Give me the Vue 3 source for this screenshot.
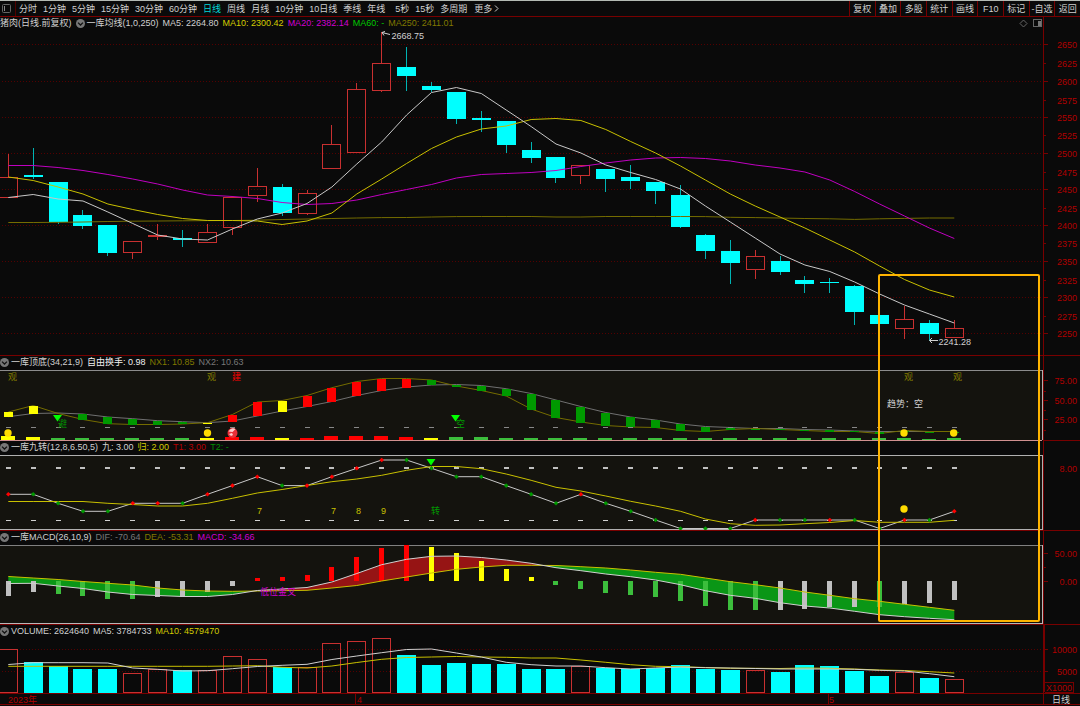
<script setup>
const STEP = 24.895
const cx = (i) => Math.round((8.3 + i * STEP) * 10) / 10
const px = (i) => Math.floor(8.3 + i * STEP)

const periods = ['分时', '1分钟', '5分钟', '15分钟', '30分钟', '60分钟', '日线', '周线', '月线', '10分钟', '10日线', '季线', '年线', '5秒', '15秒', '多周期']
const tools = ['复权', '叠加', '多股', '统计', '画线', 'F10', '标记', '-自选', '返回']

// up (1) or down (0), high, body top, body bottom, low
const candles = [
  [1, 154, 177, 197, 198], [0, 148, 175, 177, 179], [0, 182, 182, 222, 224], [0, 210, 215, 226, 229],
  [0, 225, 225, 253, 256], [1, 241, 241, 252, 259], [1, 224, 235, 236, 240], [0, 230, 238, 240, 247],
  [1, 224, 232, 242, 243], [1, 196, 197, 227, 235], [1, 168, 186, 195, 202], [0, 184, 187, 213, 216],
  [1, 190, 193, 213, 215], [1, 125, 144, 168, 168], [1, 83, 89, 152, 152], [1, 32, 63, 90, 92],
  [0, 47, 67, 76, 91], [0, 82, 86, 90, 92], [0, 92, 92, 119, 124], [0, 111, 118, 120, 132],
  [0, 121, 121, 145, 153], [0, 142, 150, 158, 163], [0, 157, 157, 178, 183], [1, 165, 165, 175, 184],
  [0, 169, 169, 179, 192], [0, 165, 177, 181, 189], [0, 182, 182, 191, 204], [0, 185, 195, 227, 228],
  [0, 234, 235, 251, 259], [0, 240, 251, 263, 284], [1, 250, 256, 269, 279], [0, 256, 261, 272, 275],
  [0, 276, 280, 284, 293], [0, 278, 282, 283, 293], [0, 285, 286, 312, 325], [0, 315, 315, 324, 324],
  [1, 306, 319, 328, 339], [0, 320, 323, 334, 341], [1, 320, 328, 337, 337]
]
const ma5 = [197.5, 194.5, 199, 201, 212, 223.5, 235, 239, 240, 229, 219, 213, 203.5, 187, 164, 142, 115, 92.5, 87.5, 93.5, 110, 126.5, 144, 153, 165, 172.5, 179.5, 189, 206, 222, 238, 254, 265, 271.5, 282, 294, 305, 314, 323]
const ma10 = [177, 180.5, 187, 194, 204, 209.5, 214.5, 218.5, 220.5, 220.5, 221, 224.5, 221, 213, 194, 179, 163.5, 148.5, 137, 129, 126, 119.5, 118.5, 120.5, 129.5, 141.5, 153, 166, 180, 194, 206, 217, 228, 240, 252, 266, 279.5, 290, 297]
const ma20 = [165.5, 165.5, 167.5, 170.5, 174.5, 179, 184, 190, 195, 196.5, 198.5, 202.5, 204.5, 203.5, 200, 194.5, 189.5, 184.5, 178, 174.5, 173.5, 172.5, 170.5, 166.5, 163, 160, 158, 157.5, 158.5, 161, 165, 168, 172, 180, 191.5, 204, 216, 228, 238.5]
const ma250 = [222.5, 222.5, 222.3, 222, 221.5, 221.2, 221, 220.8, 220.6, 220.5, 220.2, 219.5, 219, 218.5, 218, 217.6, 217.5, 217, 216.6, 216.5, 216.5, 216.5, 217, 217, 216.5, 216.5, 216.5, 216.5, 216.6, 217.3, 217.6, 218, 218.5, 218.8, 219.4, 218.8, 218.4, 218, 218]

const priceTicks = [
  ['2650', 45, 1], ['2625', 64, 0], ['2600', 82, 1], ['2575', 101, 0], ['2550', 118, 1], ['2525', 136, 0],
  ['2500', 154, 1], ['2475', 173, 0], ['2450', 190, 1], ['2425', 209, 0], ['2400', 226, 1], ['2375', 244, 0],
  ['2350', 262, 1], ['2325', 281, 0], ['2300', 298, 1], ['2275', 317, 0], ['2250', 334, 1]
]
const gridRows = priceTicks.filter((t) => t[2]).map((t) => t[1])

const nx1 = [412, 405.5, 413.5, 419.5, 423.7, 424.5, 424.5, 424, 422.7, 414.5, 402, 400.5, 395.5, 387.7, 381.5, 378.5, 378.5, 380, 386, 390.5, 396, 409, 417.5, 422, 425.5, 427, 427.5, 430.5, 431.5, 429.5, 428.5, 429.5, 430.5, 431.5, 431.5, 433.5, 430.5, 431.5, 431.5]
const nx2 = [416.7, 413.5, 413, 414, 417, 418.7, 420.7, 421.7, 422.7, 421, 416, 411, 406.5, 401.5, 395.5, 390.5, 387, 385, 384.5, 385.5, 388.7, 393.5, 400, 406.5, 412.5, 417, 420, 424, 426.5, 427.5, 428.5, 428.5, 429.5, 430, 431, 431.5, 431.5, 431.5, 431.5]
const Y = '#ffff00', R = '#ff0000', G = '#009900', L = '#3cbe3c', W = '#c0c0c0'
const trendColor = (i) => (i < 2 || i === 8 || i === 11 ? Y : i < 8 ? G : i < 17 ? R : G)
const trendBars = nx1
  .map((a, i) => {
    const top = Math.round(Math.min(a, nx2[i]))
    return { i, top, h: Math.max(1, Math.round(Math.abs(a - nx2[i]))), fill: trendColor(i) }
  })
  .filter((b) => b.i !== 2)
const footHeights = [4, 3, 2, 2, 2, 2, 2, 2, 2, 3, 3, 2, 2, 4, 4, 4, 3, 2, 3, 3, 2, 2, 2, 2, 2, 2, 2, 2, 2, 2, 2, 2, 2, 2, 2, 2, 2, 1, 2]
const footColor = (i) => ([0, 1, 8, 11, 17].includes(i) ? Y : i >= 9 && i <= 16 ? R : L)

const nine = [494.3, 494.3, 503.3, 511.3, 511.3, 503.3, 503.3, 503.3, 494.3, 485.6, 476.7, 485.6, 485.6, 476.7, 468.3, 460, 460, 468.3, 476.7, 476.7, 485.6, 494.3, 503.3, 494.3, 503.3, 511.3, 520, 528.5, 528.5, 528.5, 520, 520, 520, 520, 520, 528.5, 520, 520, 511.3]
const back = [501.5, 501.5, 501.5, 501.5, 503.3, 504.5, 506, 506, 503.3, 498.3, 493, 489.5, 485.5, 481.7, 479, 475.3, 470.3, 466.5, 466.5, 468.7, 474, 480.3, 487.3, 491, 496, 501.3, 506, 511.3, 519, 523.7, 525.3, 525, 523.7, 522.5, 520.5, 522.3, 522.3, 522.3, 520.3]
const redDots = [0, 5, 6, 8, 9, 10, 12, 13, 14, 15, 23, 30, 33, 36, 38]
const counts = [['7', 257], ['7', 331], ['8', 356], ['9', 381]]

const dif = [583.5, 583.3, 586, 588.5, 592, 594.5, 595.5, 596.5, 596.5, 594.5, 590.5, 589, 587.5, 582, 573.5, 564.7, 559.3, 556.3, 556, 557.5, 560, 563.3, 567.7, 570.7, 574, 576.7, 580, 584.7, 590.7, 595.3, 598.3, 602.7, 606, 608, 611.3, 614.7, 616.7, 618.3, 619.7]
const dea = [576.5, 578, 579.5, 581.5, 583.3, 585, 588, 590, 591, 591.3, 591, 590.7, 590.3, 588, 585.5, 581, 577, 573, 569.3, 567, 565.3, 565.3, 565.5, 566.7, 568, 570, 572.3, 574.3, 578, 581.7, 584.7, 588, 592, 595.3, 598.7, 601.3, 604.3, 607.3, 610.3]
const histDown = { 0: [596, W], 1: [592, W], 2: [594, L], 3: [596, L], 4: [599, L], 5: [599, L], 6: [597, W], 7: [597, W], 8: [592, W], 9: [586, W], 22: [585, L], 23: [589, L], 24: [593, L], 25: [595, L], 26: [597, L], 27: [601, L], 28: [606, L], 29: [610, L], 30: [610, L], 31: [610, W], 32: [609, W], 33: [607, W], 34: [607, W], 35: [607, L], 36: [604, W], 37: [603, W], 38: [600, W] }
const histUp = { 10: [578, R], 11: [577, R], 12: [575, R], 13: [567, R], 14: [557, R], 15: [548, R], 16: [545, R], 17: [547, Y], 18: [553, Y], 19: [561, Y], 20: [569, Y], 21: [577, Y] }

// up (1) or down (0), bar top
const volumes = [[1, 650], [0, 662], [0, 666], [0, 669], [0, 669], [1, 674], [1, 670], [0, 670], [1, 671], [1, 657], [1, 660], [0, 667], [1, 668], [1, 644], [1, 642], [1, 639], [0, 655], [0, 665], [0, 663], [0, 664], [0, 664], [0, 669], [0, 669], [1, 667], [0, 668], [0, 669], [0, 668], [0, 665], [0, 669], [0, 670], [1, 671], [0, 672], [0, 665], [0, 666], [0, 671], [0, 676], [1, 673], [0, 678], [1, 680]]
const vol5 = [664.5, 662.7, 662.7, 662.7, 663, 668, 669.3, 671, 670.7, 668.7, 666.5, 665.3, 664.3, 659.5, 656, 652.7, 649.5, 649, 653, 657, 662.3, 664.7, 666, 666, 667.7, 669, 668, 667, 667.7, 668, 668.5, 669, 669, 669, 669.3, 670.3, 671, 673.7, 676.7]
const vol10 = [666.3, 666.3, 666.3, 666.3, 666.3, 666.3, 666.3, 666.3, 666.3, 666, 665.7, 667.3, 668, 666, 662.5, 659.3, 657.5, 657, 656.5, 657, 657.3, 658, 658, 660, 662.3, 664.7, 666.3, 666.7, 667.5, 668.3, 668.3, 668.5, 668, 668.3, 669, 670, 670.5, 671.7, 673]

const line = (arr) => arr.map((y, i) => cx(i) + ',' + y).join(' ')
const band = (from, to, start, end) => {
  const top = [], bottom = []
  for (let i = from; i <= to; i++) {
    top.push(cx(i) + ',' + dif[i])
    bottom.unshift(cx(i) + ',' + dea[i])
  }
  return [start, ...top, end, ...bottom].filter(Boolean).join(' ')
}
const bands = [
  { pts: band(0, 9, '', '250,591.3'), fill: '#0a9616' },
  { pts: band(10, 21, '250,591.3', '544,565.4'), fill: '#961414' },
  { pts: band(22, 38, '544,565.4', ''), fill: '#0a9616' }
]
const all = candles.map((_, i) => i)
</script>

<template>
  <main class="app">
    <header class="toolbar">
      <button class="side" aria-label="侧栏">
        <svg width="9" height="9" viewBox="0 0 9 9"><rect x=".5" y=".5" width="8" height="8" rx="1" fill="none" stroke="#666" /><path d="M2.5 2v5" stroke="#888" stroke-width="1" /></svg>
      </button>
      <nav class="periods">
        <button v-for="p in periods" :key="p" :class="{ active: p === '日线', wide: p === '5秒' }">{{ p }}</button>
        <button class="more">更多<svg width="5" height="7" viewBox="0 0 5 7"><path d="M1 .5l3 3-3 3" fill="none" stroke="#ccc" /></svg></button>
      </nav>
      <nav class="tools">
        <button v-for="t in tools" :key="t">{{ t }}</button>
      </nav>
    </header>

    <div class="charts">
      <div class="head">
        <div class="info">
          <span>猪肉(日线.前复权)</span>
          <svg class="chev" viewBox="0 0 9 9"><circle cx="4.5" cy="4.5" r="4.5" /><path d="M2 3.6l2.5 2.4L7 3.6" /></svg>
          <span>一库均线(1,0,250)</span>
          <span>MA5: 2264.80</span>
          <span class="yellow">MA10: 2300.42</span>
          <span class="magenta">MA20: 2382.14</span>
          <span class="lime">MA60: -</span>
          <span class="olive">MA250: 2411.01</span>
          <svg class="corner" width="24" height="9" viewBox="0 0 24 9"><path d="M4.5 1L8 4.5 4.5 8 1 4.5z" fill="none" stroke="#666" /><rect x="14.5" y=".5" width="8" height="7" fill="none" stroke="#666" /><rect x="19" y="2" width="3" height="5" fill="#777" /></svg>
        </div>
      </div>
      <svg class="plot" viewBox="0 31 1080 325">
        <line v-for="y in gridRows" :key="y" class="grid" x1="2" x2="1043" :y1="y - 0.5" :y2="y - 0.5" />
        <g class="crisp">
          <g v-for="(c, i) in candles" :key="i" :class="c[0] ? 'up' : 'down'">
            <line :x1="px(i) + 0.5" :x2="px(i) + 0.5" :y1="c[1]" :y2="c[2]" />
            <line :x1="px(i) + 0.5" :x2="px(i) + 0.5" :y1="c[3]" :y2="c[4]" />
            <rect v-if="c[0]" :x="px(i) - 8.5" :y="c[2] + 0.5" width="18" :height="c[3] - c[2]" />
            <rect v-else :x="px(i) - 9" :y="c[2]" width="19" :height="c[3] - c[2]" />
          </g>
        </g>
        <polyline :points="line(ma250)" stroke="#746c00" />
        <polyline :points="line(ma20)" stroke="#c000c0" />
        <polyline :points="line(ma10)" stroke="#c8c000" />
        <polyline :points="line(ma5)" stroke="#c8c8c8" />
        <path d="M390 34.500l-8-2M385 31.500l-3 1 2 3" class="arrow" />
        <text x="391.500" y="36" class="light">2668.75</text>
        <path d="M938 340.500h-8M932 338l-2.500 2.500 2.500 2.500" class="arrow" />
        <text x="938.500" y="342" class="light">2241.28</text>
        <g class="axis">
          <path d="M1043.500 31v325M0 355.500h1080" />
          <path v-for="t in priceTicks" :key="t[0]" :d="`M1044 ${t[1] - 0.5}h${t[2] ? 4 : 2}`" />
          <text v-for="t in priceTicks" :key="'l' + t[0]" x="1077" :y="t[1]">{{ t[0] }}</text>
        </g>
      </svg>

      <div class="head">
        <div class="info">
          <svg class="chev" viewBox="0 0 9 9"><circle cx="4.5" cy="4.5" r="4.5" /><path d="M2 3.6l2.5 2.4L7 3.6" /></svg>
          <span>一库顶底(34,21,9)</span>
          <span class="bright">自由换手: 0.98</span>
          <span class="olive">NX1: 10.85</span>
          <span class="grey">NX2: 10.63</span>
        </div>
      </div>
      <svg class="plot" viewBox="0 370 1080 71">
        <rect x="0" y="370" width="1042" height="70" class="panel" />
        <polyline :points="line(nx2)" stroke="#707070" />
        <polyline :points="line(nx1)" stroke="#746c00" />
        <g class="crisp">
          <rect v-for="i in all" :key="'d' + i" :x="px(i) - 2" y="427" width="5" height="1" fill="#888" />
          <rect v-for="b in trendBars" :key="'t' + b.i" :x="px(b.i) - 4" :y="b.top" width="9" :height="b.h" :fill="b.fill" />
          <rect v-for="i in all" :key="'f' + i" :x="px(i) - 7" :y="440 - footHeights[i]" width="14" :height="footHeights[i]" :fill="footColor(i)" />
          <path d="M0 370.500h1042" stroke="#8c8c8c" />
          <path d="M1042.500 370v70" stroke="#b0b0b0" />
          <path d="M0 440.500h1042" stroke="#d09090" />
        </g>
        <path d="M53 415h9l-4.500 6.500z" fill="#00ff00" />
        <path d="M451 415h9l-4.500 6.500z" fill="#00ff00" />
        <circle cx="8" cy="433" r="3.700" fill="#ffdc00" />
        <circle cx="207.500" cy="433" r="3.700" fill="#ffdc00" />
        <circle cx="904" cy="433" r="3.700" fill="#ffdc00" />
        <circle cx="953.700" cy="433" r="3.700" fill="#ffdc00" />
        <circle cx="232.500" cy="433" r="5" fill="#e83038" />
        <path d="M228.500 431.500q3-5 7-2.500l-3 3zM229 434l3-1 1 2-2 1z" fill="#ffd0d0" />
        <text x="8" y="377" fill="#807800">观</text>
        <text x="207" y="377" fill="#807800">观</text>
        <text x="232" y="377" fill="#ff0000">建</text>
        <text x="904" y="377" fill="#807800">观</text>
        <text x="953" y="377" fill="#807800">观</text>
        <text x="58" y="424" fill="#009900">避</text>
        <text x="456" y="424" fill="#009900">空</text>
        <text x="887" y="404" class="light">趋势：空</text>
        <g class="axis">
          <path d="M1043.500 370v71M1043 440.500h37M1044 380.500h4M1044 391.500h2M1044 400.500h4M1044 410.500h2M1044 419.500h4M1044 430.500h2" />
          <text x="1077" y="381">75.00</text>
          <text x="1077" y="401">50.00</text>
          <text x="1077" y="420">25.00</text>
        </g>
      </svg>

      <div class="head">
        <div class="info">
          <svg class="chev" viewBox="0 0 9 9"><circle cx="4.5" cy="4.5" r="4.5" /><path d="M2 3.6l2.5 2.4L7 3.6" /></svg>
          <span>一库九转(12,8,6.50,5)</span>
          <span>九: 3.00</span>
          <span class="yellow">归: 2.00</span>
          <span class="red">T1: 3.00</span>
          <span class="green">T2: -</span>
        </div>
      </div>
      <svg class="plot" viewBox="0 455 1080 76">
        <rect x="0" y="455" width="1042" height="74" class="panel" />
        <g class="crisp">
          <rect v-for="i in all" :key="'a' + i" :x="px(i) - 2" y="467" width="5" height="2" :fill="W" />
          <rect v-for="i in all" :key="'b' + i" :x="px(i) - 2" y="520" width="5" height="1" fill="#d0d0d0" />
          <path d="M0 455.500h1042.500v74H0" fill="none" stroke="#b0b0b0" />
        </g>
        <polyline :points="line(nine)" stroke="#c8c8c8" />
        <polyline :points="line(back)" stroke="#c8c000" />
        <path v-for="(y, i) in nine" :key="i" :d="`M${cx(i)} ${y - 2.3}l2.300 2.300-2.300 2.300-2.300-2.300z`" :fill="redDots.includes(i) ? R : G" />
        <path d="M426.500 459h9l-4.500 6.500z" fill="#00ff00" />
        <circle cx="904" cy="509" r="3.700" fill="#ffdc00" />
        <text v-for="(c, k) in counts" :key="'c' + k" :x="c[1]" y="511" fill="#c8c000">{{ c[0] }}</text>
        <text x="431" y="511" fill="#009900">转</text>
        <g class="axis">
          <path d="M1043.500 455v76M0 530.500h1080" />
          <text x="1077" y="469">8.00</text>
        </g>
      </svg>

      <div class="head">
        <div class="info">
          <svg class="chev" viewBox="0 0 9 9"><circle cx="4.5" cy="4.5" r="4.5" /><path d="M2 3.6l2.5 2.4L7 3.6" /></svg>
          <span>一库MACD(26,10,9)</span>
          <span class="grey">DIF: -70.64</span>
          <span class="olive">DEA: -53.31</span>
          <span class="magenta">MACD: -34.66</span>
        </div>
      </div>
      <svg class="plot" viewBox="0 545 1080 80">
        <rect x="0" y="545" width="1042" height="79" class="panel" />
        <polygon v-for="b in bands" :key="b.pts" :points="b.pts" :fill="b.fill" />
        <path d="M0 545.500h1042" stroke="#808080" class="crisp" />
        <g class="crisp">
          <rect v-for="(v, i) in histDown" :key="i" :x="px(+i) - 2" y="581" width="5" :height="v[0] - 581" :fill="v[1]" />
          <rect v-for="(v, i) in histUp" :key="i" :x="px(+i) - 2" :y="v[0]" width="5" :height="581 - v[0]" :fill="v[1]" />
        </g>
        <polyline :points="line(dea)" stroke="#c8c000" />
        <polyline :points="line(dif)" stroke="#d0d0d0" />
        <text x="260" y="592" fill="#d000d0">低位金叉</text>
        <path d="M1042.500 545v78.500H0" fill="none" stroke="#b8b8b8" class="crisp" />
        <g class="axis">
          <path d="M1043.500 545v80M0 624.500h1080M1044 553.500h4M1044 567.500h2M1044 581.500h4" />
          <text x="1077" y="554">50.00</text>
          <text x="1077" y="582">0.00</text>
        </g>
      </svg>

      <div class="head">
        <div class="info">
          <svg class="chev" viewBox="0 0 9 9"><circle cx="4.5" cy="4.5" r="4.5" /><path d="M2 3.6l2.5 2.4L7 3.6" /></svg>
          <span>VOLUME: 2624640</span>
          <span>MA5: 3784733</span>
          <span class="yellow">MA10: 4579470</span>
        </div>
      </div>
      <svg class="plot volume" viewBox="0 639 1080 55">
        <line class="grid" x1="2" x2="1043" y1="649.500" y2="649.500" />
        <line class="grid" x1="2" x2="1043" y1="671.500" y2="671.500" />
        <g class="crisp">
          <g v-for="(v, i) in volumes" :key="i" :class="v[0] ? 'up' : 'down'">
            <rect v-if="v[0]" :x="px(i) - 8.5" :y="v[1] - 0.5" width="18" :height="693 - v[1]" />
            <rect v-else :x="px(i) - 9" :y="v[1]" width="19" :height="693 - v[1]" />
          </g>
        </g>
        <polyline :points="line(vol10)" stroke="#c8c000" />
        <polyline :points="line(vol5)" stroke="#d0d0d0" />
        <g class="axis">
          <path d="M1043.500 639v55M1044.500 625v67M0 693.500h1080M1044 649.500h4M1044 671.500h4M1045 682.500h28.500v10h-28.500" />
          <text x="1077" y="650">10000</text>
          <text x="1077" y="672">5000</text>
          <text x="1072" y="688">X1000</text>
        </g>
      </svg>

      <svg class="plot" viewBox="0 694 1080 12">
        <g class="axis">
          <path d="M0 704.500h1080M355.500 694v10M828.500 694v10M1043.500 694v10" />
          <text x="8" y="700" class="start">2023年</text>
          <text x="357" y="700" class="start">4</text>
          <text x="829" y="700" class="start">5</text>
        </g>
        <text x="1052" y="700" class="light">日线</text>
      </svg>

      <div class="focus"></div>
    </div>
  </main>
</template>

<style>
body { margin: 0; background: #0a0a0a; }
</style>

<style scoped>
.app {
  background: #0a0a0a;
  color: #d0d0d0;
  font: 9px/12px "Liberation Sans", "Noto Sans CJK SC", sans-serif;
  overflow: hidden;
}
button {
  margin: 0;
  padding: 0;
  border: 0;
  background: none;
  color: inherit;
  font: inherit;
  white-space: nowrap;
}
.toolbar {
  box-sizing: border-box;
  height: 17px;
  display: flex;
  border-top: 1px solid #b4bab4;
  border-bottom: 1px solid #780000;
}
.side {
  width: 16px;
  flex: none;
  display: flex;
  align-items: center;
  padding-left: 2px;
  border-right: 1px solid #500000;
  box-sizing: border-box;
}
.periods {
  flex: 1;
  display: flex;
  align-items: center;
  gap: 6px;
  padding-left: 3px;
}
.active { color: #00d8d8; }
.wide { padding-left: 4px; }
.more { display: flex; align-items: center; gap: 2px; padding-left: 1px; }
.tools {
  width: 231px;
  display: grid;
  grid-template-columns: repeat(9, 1fr);
}
.tools button { border-left: 1px solid #780000; }
.charts { position: relative; }
.head {
  height: 14px;
  display: grid;
  grid-template-columns: 1044fr 36fr;
}
.info {
  display: flex;
  align-items: center;
  gap: 4px;
  padding-bottom: 2px;
  border-right: 1px solid #780000;
  white-space: nowrap;
}
.chev {
  width: 9px;
  height: 9px;
  margin-right: -2px;
}
.chev circle { fill: #777; }
.chev path { fill: none; stroke: #111; stroke-width: 1.3; }
.corner { margin-left: auto; }
.yellow { color: #d4cc00; }
.magenta { color: #d000d0; }
.lime { color: #00c800; }
.olive { color: #807800; }
.grey { color: #777; }
.bright { color: #f0f0f0; }
.red { color: #b40000; }
.green { color: #008c00; }
.plot {
  display: block;
  width: 100%;
  height: auto;
}
.volume { overflow: visible; }
.plot text { font-size: 9px; dominant-baseline: central; }
.plot polyline { fill: none; stroke-width: 1; }
.panel { fill: #14130e; }
.light { fill: #d0d0d0; }
.arrow { fill: none; stroke: #d0d0d0; }
.grid { stroke: #540000; stroke-dasharray: 1 2; }
.crisp { shape-rendering: crispEdges; }
.up line, .up rect { fill: none; stroke: #c83030; }
.down line { stroke: #00b4b4; }
.down rect { fill: #00ffff; }
.axis path { fill: none; stroke: #780000; shape-rendering: crispEdges; }
.axis text { fill: #b00000; text-anchor: end; }
.axis .start { text-anchor: start; }
.focus {
  position: absolute;
  box-sizing: border-box;
  left: 81.25%;
  top: 37.3%;
  width: 15%;
  height: 50.5%;
  border: 2px solid #ffb400;
  border-radius: 2px;
  pointer-events: none;
}
</style>
